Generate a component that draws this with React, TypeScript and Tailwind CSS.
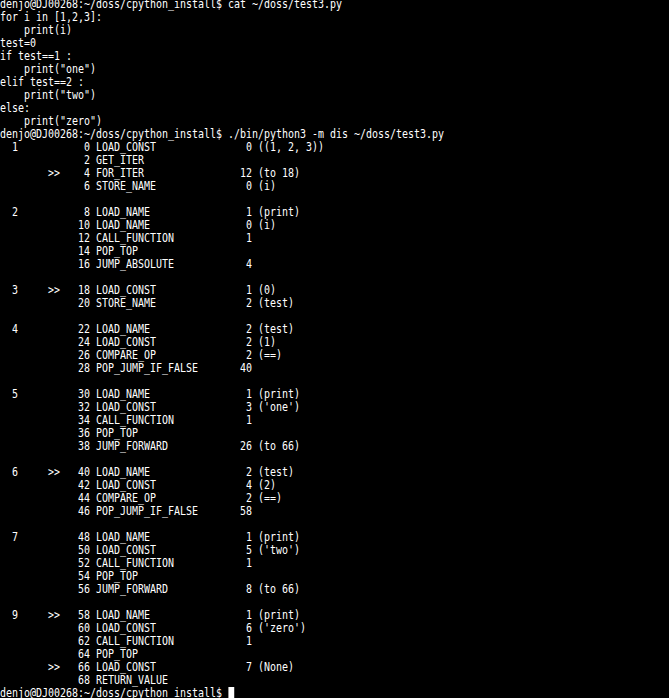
type Ins = [string, boolean, number, string, number?, string?];

const prompt = "denjo@DJ00268:~/doss/cpython_install$";

const source = [
  `${prompt} cat ~/doss/test3.py`,
  "for i in [1,2,3]:",
  "    print(i)",
  "test=0",
  "if test==1 :",
  '    print("one")',
  "elif test==2 :",
  '    print("two")',
  "else:",
  '    print("zero")',
  `${prompt} ./bin/python3 -m dis ~/doss/test3.py`,
];

// null = blank line between source lines
const code: (Ins | null)[] = [
  ["1", false, 0, "LOAD_CONST", 0, "(1, 2, 3)"],
  ["", false, 2, "GET_ITER"],
  ["", true, 4, "FOR_ITER", 12, "to 18"],
  ["", false, 6, "STORE_NAME", 0, "i"],
  null,
  ["2", false, 8, "LOAD_NAME", 1, "print"],
  ["", false, 10, "LOAD_NAME", 0, "i"],
  ["", false, 12, "CALL_FUNCTION", 1],
  ["", false, 14, "POP_TOP"],
  ["", false, 16, "JUMP_ABSOLUTE", 4],
  null,
  ["3", true, 18, "LOAD_CONST", 1, "0"],
  ["", false, 20, "STORE_NAME", 2, "test"],
  null,
  ["4", false, 22, "LOAD_NAME", 2, "test"],
  ["", false, 24, "LOAD_CONST", 2, "1"],
  ["", false, 26, "COMPARE_OP", 2, "=="],
  ["", false, 28, "POP_JUMP_IF_FALSE", 40],
  null,
  ["5", false, 30, "LOAD_NAME", 1, "print"],
  ["", false, 32, "LOAD_CONST", 3, "'one'"],
  ["", false, 34, "CALL_FUNCTION", 1],
  ["", false, 36, "POP_TOP"],
  ["", false, 38, "JUMP_FORWARD", 26, "to 66"],
  null,
  ["6", true, 40, "LOAD_NAME", 2, "test"],
  ["", false, 42, "LOAD_CONST", 4, "2"],
  ["", false, 44, "COMPARE_OP", 2, "=="],
  ["", false, 46, "POP_JUMP_IF_FALSE", 58],
  null,
  ["7", false, 48, "LOAD_NAME", 1, "print"],
  ["", false, 50, "LOAD_CONST", 5, "'two'"],
  ["", false, 52, "CALL_FUNCTION", 1],
  ["", false, 54, "POP_TOP"],
  ["", false, 56, "JUMP_FORWARD", 8, "to 66"],
  null,
  ["9", true, 58, "LOAD_NAME", 1, "print"],
  ["", false, 60, "LOAD_CONST", 6, "'zero'"],
  ["", false, 62, "CALL_FUNCTION", 1],
  ["", false, 64, "POP_TOP"],
  ["", true, 66, "LOAD_CONST", 7, "None"],
  ["", false, 68, "RETURN_VALUE"],
];

// same layout as dis.Instruction._disassemble
function fmt(ins: Ins | null) {
  if (!ins) return "";
  const [line, jump, off, op, arg, rep] = ins;
  const fields = [
    line.padStart(3),
    "   ",
    jump ? ">>" : "  ",
    String(off).padStart(4),
    op.padEnd(20),
  ];
  if (arg !== undefined) fields.push(String(arg).padStart(5));
  if (rep) fields.push(`(${rep})`);
  return fields.join(" ").trimEnd();
}

const lines = [...source, ...code.map(fmt)];

export default function App() {
  return (
    <div className="w-full h-[698px] bg-black overflow-hidden">
      <pre
        className="-mt-[2px] origin-top-left scale-x-[0.8306] text-white text-[12px] leading-[13px] whitespace-pre"
        style={{ fontFamily: '"DejaVu Sans Mono", "Liberation Mono", monospace' }}
      >
        {lines.map((l, i) => (
          <div key={i} className="h-[13px]">
            {l}
          </div>
        ))}
        <div className="h-[13px]">
          {prompt}{" "}
          <span className="inline-block w-[7.22px] h-[13px] align-top bg-white" />
        </div>
      </pre>
    </div>
  );
}
